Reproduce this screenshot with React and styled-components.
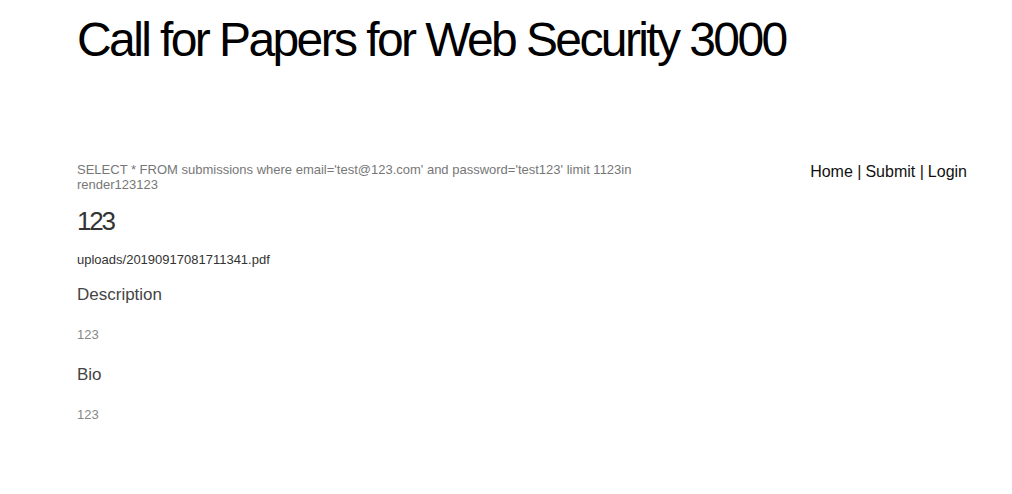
import React from "react";
import styled, { createGlobalStyle } from "styled-components";

const Global = createGlobalStyle`
  html, body { margin: 0; padding: 0; background: #fff; }
  body { font-family: "Liberation Sans", Arial, sans-serif; }
`;

const Page = styled.div`
  padding: 0 45px 0 77px;
`;

const Title = styled.h1`
  margin: 0;
  padding-top: 14px;
  height: 136px;
  font-size: 48px;
  font-weight: 400;
  letter-spacing: -2.6px;
  line-height: 52px;
  color: #000;
`;

const Row = styled.div`
  display: flex;
  justify-content: space-between;
  align-items: flex-start;
`;

const Main = styled.div`
  width: 600px;
`;

const Query = styled.p`
  margin: 0;
  font-size: 13px;
  line-height: 15px;
  color: #777;
  padding-top: 12px;
`;

const Heading = styled.h2`
  margin: 14px 0 0;
  font-size: 26px;
  font-weight: 400;
  letter-spacing: -2.2px;
  line-height: 30px;
  color: #333;
`;

const FileLink = styled.p`
  margin: 16px 0 0;
  font-size: 13px;
  line-height: 15px;
  color: #333;
`;

const SubHeading = styled.h3`
  margin: ${(p) => p.$top}px 0 0;
  font-size: 17px;
  font-weight: 400;
  line-height: 20px;
  color: #444;
`;

const Body = styled.p`
  margin: 22px 0 0;
  font-size: 13px;
  line-height: 15px;
  color: #888;
`;

const Nav = styled.nav`
  padding-top: 13px;
  font-size: 16px;
  line-height: 18px;
  color: #111;
  display: flex;
  gap: 4px;
`;

const NavLink = styled.span``;

export default function App() {
  return (
    <>
      <Global />
      <Page>
        <Title>Call for Papers for Web Security 3000</Title>
        <Row>
          <Main>
            <Query>
              SELECT * FROM submissions where email='test@123.com' and
              password='test123' limit 1123in render123123
            </Query>
            <Heading>123</Heading>
            <FileLink>uploads/20190917081711341.pdf</FileLink>
            <SubHeading $top={18}>Description</SubHeading>
            <Body>123</Body>
            <SubHeading $top={23}>Bio</SubHeading>
            <Body>123</Body>
          </Main>
          <Nav>
            <NavLink>Home |</NavLink>
            <NavLink>Submit |</NavLink>
            <NavLink>Login</NavLink>
          </Nav>
        </Row>
      </Page>
    </>
  );
}
